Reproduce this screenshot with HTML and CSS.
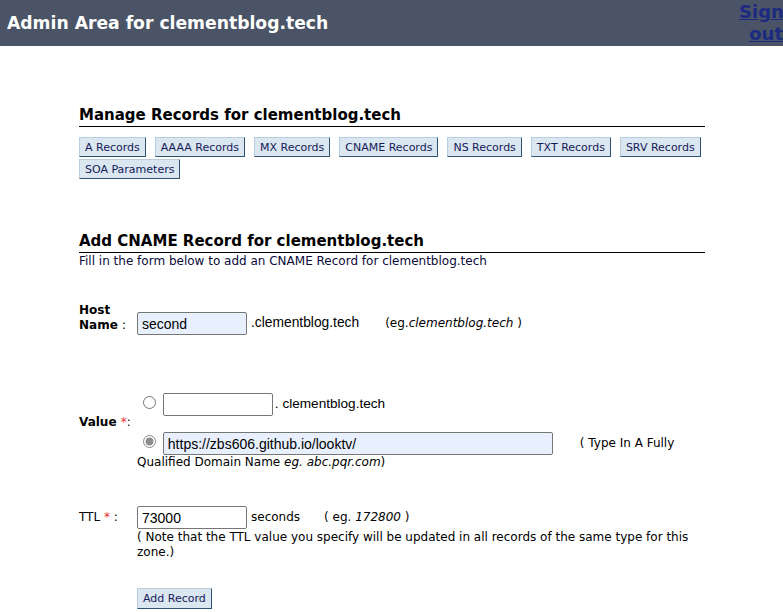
FILE: index.html
```html
<!DOCTYPE html>
<html>
<head>
<meta charset="utf-8">
<title>Admin Area</title>
<link rel="stylesheet" href="styles.css">
</head>
<body>
<header class="topbar">
  <h1 class="brand">Admin Area for clementblog.tech</h1>
  <a class="signout" href="#">Sign out</a>
</header>
<main class="content">
  <section class="manage">
    <h2 class="section-title">Manage Records for clementblog.tech</h2>
    <div class="rec-buttons">
      <button class="btn">A Records</button>
      <button class="btn">AAAA Records</button>
      <button class="btn">MX Records</button>
      <button class="btn">CNAME Records</button>
      <button class="btn">NS Records</button>
      <button class="btn">TXT Records</button>
      <button class="btn">SRV Records</button>
      <button class="btn">SOA Parameters</button>
    </div>
  </section>
  <section class="add">
    <h2 class="section-title">Add CNAME Record for clementblog.tech</h2>
    <p class="intro">Fill in the form below to add an CNAME Record for clementblog.tech</p>
    <form class="rec-form">
      <div class="row row-host">
        <label class="lbl lbl-bold">Host Name <span class="colon">:</span></label>
        <div class="field">
          <input class="txt txt-fill" type="text" value="second"><span class="suffix">.clementblog.tech</span><span class="hint">(eg.<i>clementblog.tech</i> )</span>
        </div>
      </div>
      <div class="row row-value">
        <label class="lbl lbl-bold lbl-value">Value <span class="req">*</span><span class="colon">:</span></label>
        <div class="field">
          <div class="vline"><input class="radio" type="radio" name="v"> <input class="txt" type="text"><span class="suffix2">. clementblog.tech</span></div>
          <div class="vline vline2"><input class="radio" type="radio" name="v" checked> <input class="txt txt-fill txt-long" type="text" value="https://zbs606.github.io/looktv/"><span class="note-inline">( Type In A Fully</span><br>Qualified Domain Name <i>eg. abc.pqr.com</i>)</div>
        </div>
      </div>
      <div class="row row-ttl">
        <label class="lbl lbl-ttl">TTL <span class="req">*</span> <span class="colon">:</span></label>
        <div class="field">
          <input class="txt" type="text" value="73000"><span class="unit">seconds</span><span class="hint2">( eg. <i>172800</i> )</span>
          <div class="ttl-note">( Note that the TTL value you specify will be updated in all records of the same type for this zone.)</div>
        </div>
      </div>
      <div class="row row-submit">
        <div class="lbl"></div>
        <div class="field"><button class="btn btn-submit" type="button">Add Record</button></div>
      </div>
    </form>
  </section>
</main>
</body>
</html>
```
FILE: styles.css
```css
* { box-sizing: border-box; }
body {
  margin: 0;
  font-family: "DejaVu Sans", Verdana, sans-serif;
  font-size: 12px;
  color: #000;
  background: #fff;
}
.topbar {
  display: flex;
  justify-content: space-between;
  align-items: flex-start;
  height: 46px;
  background: #4a5466;
}
.brand {
  margin: 0;
  padding: 12px 0 0 7px;
  font-size: 17.2px;
  line-height: 22px;
  color: #fff;
  font-weight: bold;
}
.signout {
  width: 44px;
  padding-top: 1px;
  text-align: right;
  font-size: 18px;
  line-height: 22px;
  font-weight: bold;
  color: #1c2a80;
}
.content {
  width: 626px;
  margin-left: 79px;
  padding-top: 59px;
}
.section-title {
  margin: 0;
  font-size: 15px;
  line-height: 20px;
  font-weight: bold;
  border-bottom: 1px solid #000;
  padding-bottom: 1px;
}
.rec-buttons {
  display: flex;
  flex-wrap: wrap;
  gap: 2px 9px;
  margin-top: 10px;
}
.btn {
  font-family: "DejaVu Sans", Verdana, sans-serif;
  font-size: 11px;
  height: 20px;
  padding: 0 5px;
  color: #151a5a;
  background: #dae6f0;
  border: 1px solid;
  border-color: #b9cde0 #2f5170 #2f5170 #b9cde0;
  border-radius: 1px;
}
.add { margin-top: 52px; }
.intro {
  margin: 1px 0 0;
  line-height: 15px;
  color: #0a0a3a;
}
.row { display: flex; }
.lbl { width: 58px; flex: none; }
.lbl-bold { font-weight: bold; font-size: 12px; line-height: 15px; }
.colon, .req { font-weight: normal; }
.req { color: #e03030; }
.row-host { margin-top: 34px; }
.row-host .field { padding-top: 9px; }
.txt {
  width: 110px;
  height: 23px;
  border: 1px solid #767676;
  border-radius: 2px;
  padding: 0 4px;
  font-family: "Liberation Sans", Arial, sans-serif;
  font-size: 14px;
  background: #fff;
  vertical-align: middle;
}
.txt-fill { background: #e8f0fe; }
.txt-long { width: 390px; }
.suffix { font-family: "Liberation Sans", Arial, sans-serif; font-size: 13.8px; margin-left: 4px; }
.suffix2 { font-family: "Liberation Sans", Arial, sans-serif; font-size: 13.6px; margin-left: 2px; }
.hint { margin-left: 26px; }
.row-value { margin-top: 58px; align-items: center; }
.lbl-value { padding-bottom: 18px; }
.vline2 { margin-top: 16px; line-height: 15px; }
.radio {
  width: 13px;
  height: 13px;
  margin: 0 3px 0 6px;
  vertical-align: middle;
  accent-color: #8c8c8c;
  position: relative;
  top: -2px;
}
.note-inline { margin-left: 27px; }
.row-ttl { margin-top: 36px; }
.lbl-ttl { padding-top: 4px; }
.unit { margin-left: 4px; }
.hint2 { margin-left: 24px; }
.ttl-note { margin-top: 1px; line-height: 15px; }
.row-submit { margin-top: 28px; }
.btn-submit { height: 21px; }
```
